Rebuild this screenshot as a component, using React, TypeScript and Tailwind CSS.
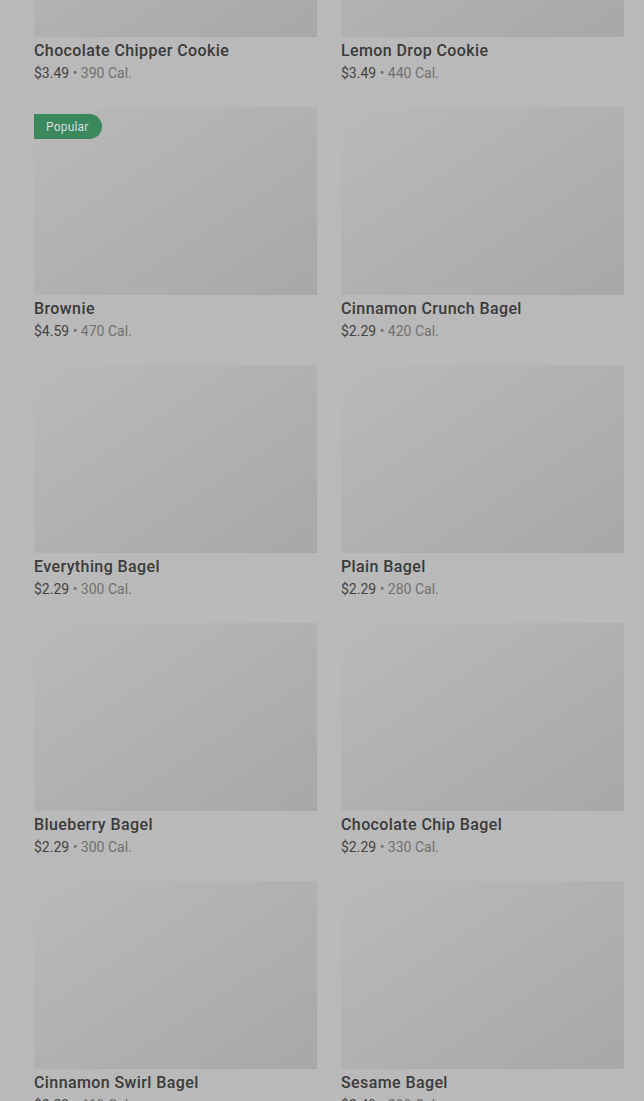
import React from "react";

type Item = { name: string; price: string; cal: string; popular?: boolean };

const items: Item[] = [
  { name: "Chocolate Chipper Cookie", price: "$3.49", cal: "390 Cal." },
  { name: "Lemon Drop Cookie", price: "$3.49", cal: "440 Cal." },
  { name: "Brownie", price: "$4.59", cal: "470 Cal.", popular: true },
  { name: "Cinnamon Crunch Bagel", price: "$2.29", cal: "420 Cal." },
  { name: "Everything Bagel", price: "$2.29", cal: "300 Cal." },
  { name: "Plain Bagel", price: "$2.29", cal: "280 Cal." },
  { name: "Blueberry Bagel", price: "$2.29", cal: "300 Cal." },
  { name: "Chocolate Chip Bagel", price: "$2.29", cal: "330 Cal." },
  { name: "Cinnamon Swirl Bagel", price: "$2.29", cal: "410 Cal." },
  { name: "Sesame Bagel", price: "$2.49", cal: "290 Cal." },
];

function Card({ item }: { item: Item }) {
  return (
    <div className="flex flex-col">
      <div className="relative h-[188px] bg-gradient-to-br from-[#b9b9b9] to-[#a8a8a8]">
        {item.popular && (
          <div className="absolute left-0 top-[7px] flex h-[25px] items-center rounded-r-full bg-[#3a885c] pl-[12px] pr-[13px] text-[12px] tracking-[0.2px] text-[#dcdcdc]">
            Popular
          </div>
        )}
      </div>
      <div className="mt-[4px] text-[16px] leading-[20px] font-medium tracking-[0.4px] text-[#3b3b3b]">
        {item.name}
      </div>
      <div className="mt-[2px] text-[14px] leading-[20px]">
        <span className="text-[#444444]">{item.price}</span>
        <span className="text-[#717171]"> • {item.cal}</span>
      </div>
    </div>
  );
}

export default function App() {
  return (
    <div
      className="h-[1101px] w-[644px] overflow-hidden bg-[#b9b9b9]"
      style={{ fontFamily: "Roboto, 'Noto Sans', sans-serif" }}
    >
      <div className="-mt-[151px] grid grid-cols-2 gap-x-[24px] gap-y-[24px] pl-[34px] pr-[20px]">
        {items.map((it) => (
          <Card key={it.name} item={it} />
        ))}
      </div>
    </div>
  );
}
